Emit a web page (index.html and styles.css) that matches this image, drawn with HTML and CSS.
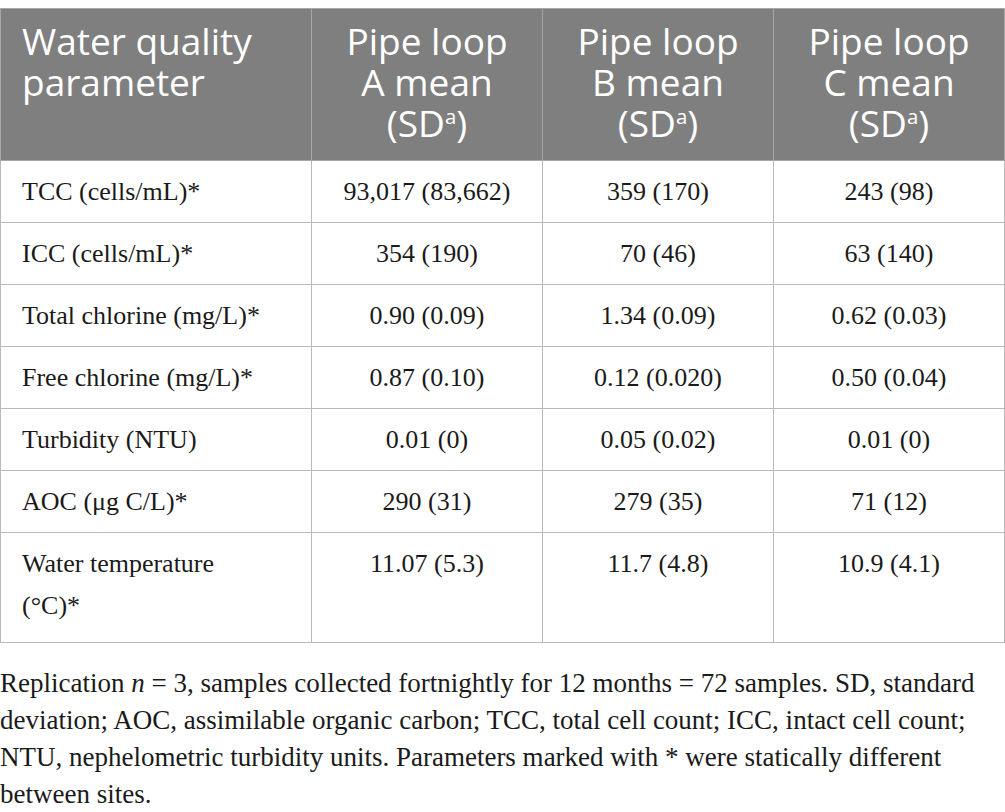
FILE: index.html
```html
<!DOCTYPE html>
<html lang="en">

<head>
  <meta charset="UTF-8">
  <title>Water quality parameters</title>
  <link rel="stylesheet" href="styles.css">
</head>

<body>
  <div class="container">
    <table class="wq-table">
      <colgroup>
        <col class="wq-col-name">
        <col class="wq-col-val">
        <col class="wq-col-val">
        <col class="wq-col-val">
      </colgroup>
      <thead>
        <tr>
          <th class="wq-name">Water quality parameter</th>
          <th>Pipe loop A mean (SD<sup>a</sup>)</th>
          <th>Pipe loop B mean (SD<sup>a</sup>)</th>
          <th>Pipe loop C mean (SD<sup>a</sup>)</th>
        </tr>
      </thead>
      <tbody>
        <tr>
          <td class="wq-name">TCC (cells/mL)*</td>
          <td>93,017 (83,662)</td>
          <td>359 (170)</td>
          <td>243 (98)</td>
        </tr>
        <tr>
          <td class="wq-name">ICC (cells/mL)*</td>
          <td>354 (190)</td>
          <td>70 (46)</td>
          <td>63 (140)</td>
        </tr>
        <tr>
          <td class="wq-name">Total chlorine (mg/L)*</td>
          <td>0.90 (0.09)</td>
          <td>1.34 (0.09)</td>
          <td>0.62 (0.03)</td>
        </tr>
        <tr>
          <td class="wq-name">Free chlorine (mg/L)*</td>
          <td>0.87 (0.10)</td>
          <td>0.12 (0.020)</td>
          <td>0.50 (0.04)</td>
        </tr>
        <tr>
          <td class="wq-name">Turbidity (NTU)</td>
          <td>0.01 (0)</td>
          <td>0.05 (0.02)</td>
          <td>0.01 (0)</td>
        </tr>
        <tr>
          <td class="wq-name">AOC (μg C/L)*</td>
          <td>290 (31)</td>
          <td>279 (35)</td>
          <td>71 (12)</td>
        </tr>
        <tr class="wq-tall">
          <td class="wq-name">Water temperature (°C)*</td>
          <td>11.07 (5.3)</td>
          <td>11.7 (4.8)</td>
          <td>10.9 (4.1)</td>
        </tr>
      </tbody>
    </table>

    <p class="wq-note">
      Replication <i>n</i> = 3, samples collected fortnightly for 12 months = 72 samples. SD, standard
      deviation; AOC, assimilable organic carbon; TCC, total cell count; ICC, intact cell count;
      NTU, nephelometric turbidity units. Parameters marked with * were statically different
      between sites.
    </p>
  </div>
</body>

</html>
```

FILE: styles.css
```css
body {
  margin: 0;
  background: #fff;
}

.container {
  padding-top: 8px;
  width: 1005px;
}

.wq-table {
  width: 1004px;
  border-collapse: collapse;
  table-layout: fixed;
  border: 1px solid #b9b9b9;
}

.wq-col-name {
  width: 311px;
}

.wq-col-val {
  width: 231px;
}

.wq-table th {
  height: 140px;
  padding: 11px 22px 0;
  border: 1px solid #a6a6a6;
  vertical-align: top;
  text-align: center;
  font-family: "Open Sans", sans-serif;
  font-size: 37px;
  font-weight: normal;
  line-height: 41px;
  color: #fff;
  background-color: #7f7f7f;
}

.wq-table th sup {
  font-size: 55%;
  line-height: 0;
  vertical-align: 0.65em;
}

.wq-table td {
  height: 51px;
  padding: 10px 10px 0;
  border: 1px solid #b9b9b9;
  vertical-align: top;
  text-align: center;
  font-family: "Liberation Serif", serif;
  font-size: 26px;
  line-height: 42px;
  color: #1a1a1a;
}

.wq-table .wq-name {
  padding-left: 21px;
  padding-right: 40px;
  text-align: left;
}

.wq-tall td {
  height: 99px;
}

.wq-note {
  margin: 22px 0 0;
  width: 980px;
  font-family: "Liberation Serif", serif;
  font-size: 27px;
  line-height: 37px;
  color: #1a1a1a;
}
```
